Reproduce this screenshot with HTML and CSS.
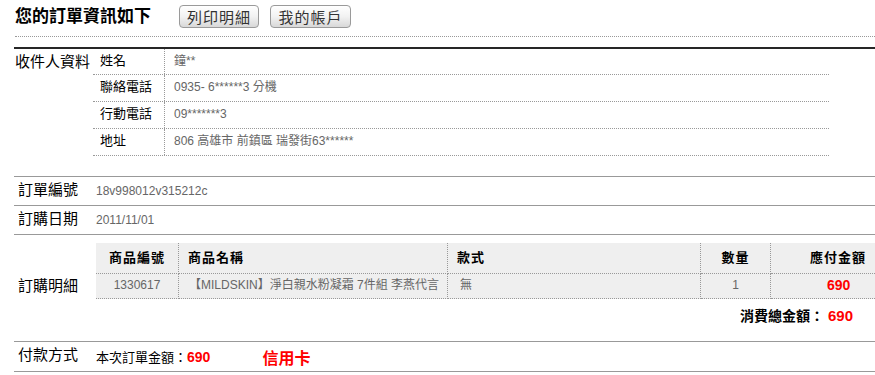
FILE: index.html
```html
<!DOCTYPE html>
<html lang="zh-Hant">
<head>
<meta charset="utf-8">
<title>訂單資訊</title>
<link rel="stylesheet" href="styles.css">
</head>
<body>
<div class="page">
  <div class="header">
    <h1 class="title">您的訂單資訊如下</h1>
    <div class="btns">
      <button class="btn">列印明細</button>
      <button class="btn">我的帳戶</button>
    </div>
  </div>

  <div class="recipient">
    <div class="sec-label">收件人資料</div>
    <div class="info">
      <div class="info-row"><div class="info-k">姓名</div><div class="info-v">鐘**</div></div>
      <div class="info-row"><div class="info-k">聯絡電話</div><div class="info-v">0935- 6******3 分機</div></div>
      <div class="info-row"><div class="info-k">行動電話</div><div class="info-v">09*******3</div></div>
      <div class="info-row"><div class="info-k">地址</div><div class="info-v">806 高雄市 前鎮區 瑞發街63******</div></div>
    </div>
  </div>

  <div class="row first">
    <div class="row-label">訂單編號</div>
    <div class="row-val">18v998012v315212c</div>
  </div>
  <div class="row">
    <div class="row-label">訂購日期</div>
    <div class="row-val">2011/11/01</div>
  </div>
  <div class="row detail">
    <div class="row-label">訂購明細</div>
    <div class="detail-body">
      <div class="grid">
        <div class="gh c1">商品編號</div>
        <div class="gh c2">商品名稱</div>
        <div class="gh c3">款式</div>
        <div class="gh c4">數量</div>
        <div class="gh c5">應付金額</div>
        <div class="gd c1">1330617</div>
        <div class="gd c2 pname">【MILDSKIN】淨白親水粉凝霜 7件組 李燕代言</div>
        <div class="gd c3">無</div>
        <div class="gd c4">1</div>
        <div class="gd c5"><span class="red price">690</span></div>
      </div>
      <div class="total">消費總金額： <span class="red">690</span></div>
    </div>
  </div>
  <div class="row last">
    <div class="row-label">付款方式</div>
    <div class="pay">
      <span class="pay-k">本次訂單金額：</span><span class="red pay-amt">690</span>
      <span class="red card">信用卡</span>
    </div>
  </div>
</div>
</body>
</html>
```

FILE: styles.css
```css
html, body {
  margin: 0;
  padding: 0;
  background: #fff;
}
body {
  font-family: "Liberation Sans", "Noto Sans CJK TC", sans-serif;
  color: #000;
}
.page {
  margin-left: 14px;
  width: 861px;
}
.header {
  display: flex;
  align-items: center;
  height: 36px;
  margin-left: 1px;
  border-bottom: 1px dotted #999;
}
.title {
  margin: 0;
  font-size: 17px;
  font-weight: bold;
  line-height: 20px;
  padding-bottom: 2px;
}
.btns {
  display: flex;
  gap: 11px;
  margin-left: 28px;
  margin-bottom: 3px;
}
.btn {
  height: 23px;
  width: 80px;
  padding: 0;
  font-family: "Noto Sans CJK TC", sans-serif;
  font-size: 15px;
  line-height: 21px;
  color: #333;
  letter-spacing: 1px;
  border: 1px solid #9a9a9a;
  border-radius: 4px;
  background: linear-gradient(#ffffff, #f2f2f2 50%, #d8d8d8);
}
.btns .btn + .btn { width: 81px; }

.recipient {
  display: flex;
  margin-top: 10px;
  border-top: 2px solid #262626;
  padding-bottom: 20px;
}
.sec-label {
  width: 79px;
  padding-left: 1px;
  font-size: 15px;
  line-height: 22px;
  padding-top: 2px;
  box-sizing: border-box;
}
.info {
  width: 736px;
}
.info-row {
  display: flex;
  height: 27px;
  border-bottom: 1px dotted #999;
  box-sizing: border-box;
  font-size: 13px;
}
.info-row:first-child { height: 26px; }
.info-k {
  width: 72px;
  padding-left: 7px;
  box-sizing: border-box;
  border-right: 1px dotted #999;
  line-height: 24px;
}
.info-v {
  padding-left: 9px;
  color: #666;
  font-size: 12px;
  line-height: 24px;
}

.row {
  display: flex;
  border-top: 1px solid #999;
  min-height: 28px;
}
.row.last {
  border-bottom: 1px solid #999;
  height: 29px;
}
.row-label {
  width: 82px;
  padding-left: 4px;
  box-sizing: border-box;
  font-size: 15px;
  line-height: 26px;
  flex-shrink: 0;
}
.row-val {
  font-size: 12px;
  color: #666;
  line-height: 28px;
}
.detail .row-label {
  display: flex;
  align-items: center;
  padding-bottom: 4px;
}
.detail-body {
  flex: 1;
  padding-top: 8px;
  height: 106px;
  box-sizing: border-box;
}
.grid {
  display: grid;
  grid-template-columns: 83px 269px 253px 70px 104px;
  background: #efefef;
  margin-left: 0;
}
.gh {
  height: 31px;
  line-height: 30px;
  font-size: 13px;
  font-weight: bold;
  border-bottom: 1px dotted #999;
  box-sizing: border-box;
  letter-spacing: 1px;
}
.gd {
  height: 25px;
  line-height: 23px;
  font-size: 12px;
  color: #666;
  border-bottom: 1px dotted #999;
  box-sizing: border-box;
}
.c1, .c2, .c3, .c4 { border-right: 1px dotted #999; }
.gh.c1 { text-align: center; }
.gh.c2 { padding-left: 9px; }
.gh.c3 { padding-left: 9px; }
.gh.c4 { text-align: center; }
.gh.c5 { text-align: right; padding-right: 9px; }
.gd.c1 { text-align: center; }
.gd.c2 { padding-left: 10px; }
.gd.c3 { padding-left: 12px; }
.gd.c4 { text-align: center; }
.gd.c5 { padding-left: 56px; }
.pname { white-space: nowrap; }
.red { color: #ff0000; font-weight: bold; }
.price { font-size: 14px; }
.total {
  text-align: right;
  padding-right: 22px;
  font-size: 14px;
  font-weight: bold;
  line-height: 18px;
  padding-top: 8px;
}
.total .red { font-size: 15px; }
.pay {
  display: flex;
  align-items: center;
  height: 29px;
  padding-left: 0;
}
.pay-k { font-size: 13px; margin-left: 0; }
.pay-amt { font-size: 14px; }
.card { font-size: 16px; margin-left: 52px; }
```
